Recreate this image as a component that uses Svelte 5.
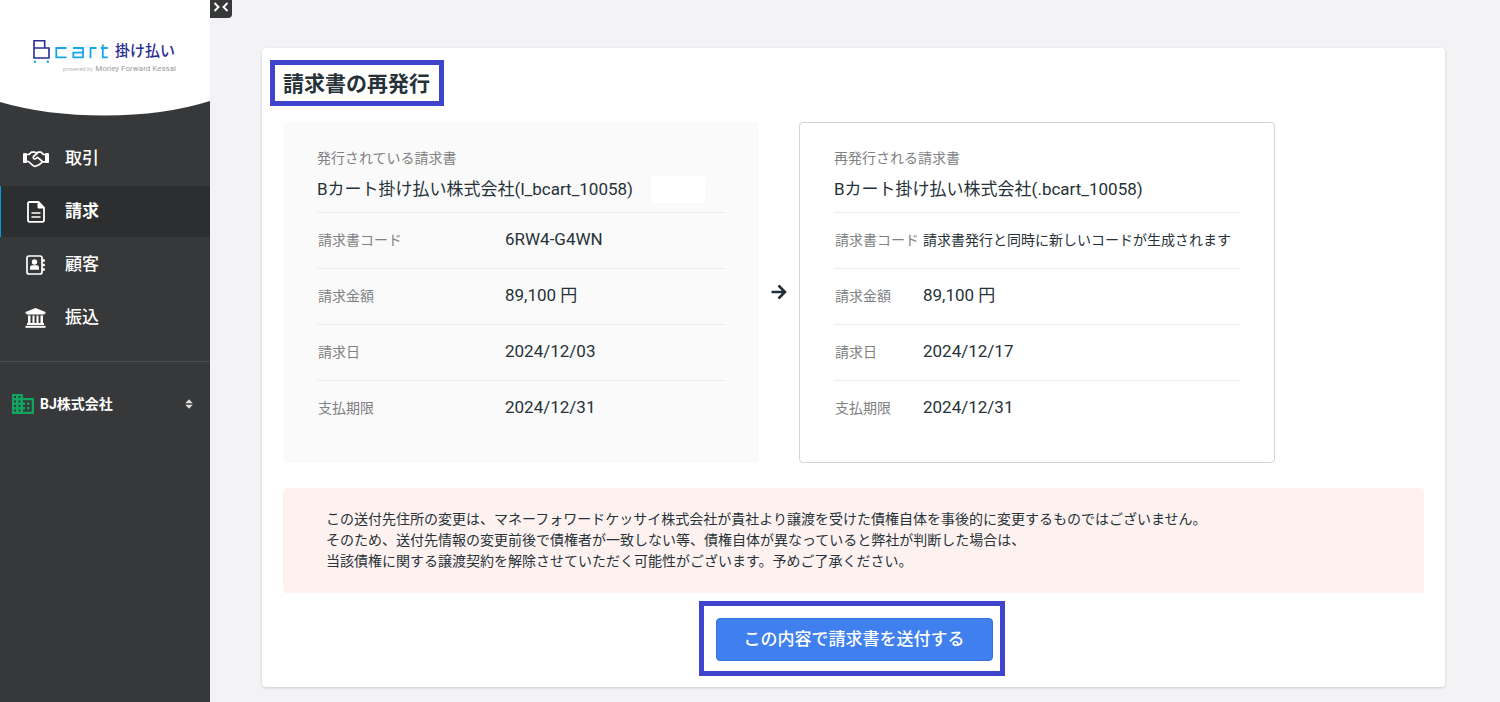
<script>
  const company = 'Bカート掛け払い株式会社';

  const menu = [
    { label: '取引', icon: 'handshake' },
    { label: '請求', icon: 'file', active: true },
    { label: '顧客', icon: 'contacts' },
    { label: '振込', icon: 'bank' },
  ];

  const invoices = [
    {
      kind: 'current',
      heading: '発行されている請求書',
      name: `${company}(l_bcart_10058)`,
      rows: [
        ['請求書コード', '6RW4-G4WN'],
        ['請求金額', '89,100 円'],
        ['請求日', '2024/12/03'],
        ['支払期限', '2024/12/31'],
      ],
    },
    {
      kind: 'next',
      heading: '再発行される請求書',
      name: `${company}(.bcart_10058)`,
      rows: [
        ['請求書コード', '請求書発行と同時に新しいコードが生成されます', true],
        ['請求金額', '89,100 円'],
        ['請求日', '2024/12/17'],
        ['支払期限', '2024/12/31'],
      ],
    },
  ];
</script>

{#snippet invoicePanel(inv)}
  <section class="panel {inv.kind}">
    <p class="kind">{inv.heading}</p>
    <h2 class="name">
      {inv.name}
      {#if inv.kind === 'current'}<span class="blank"></span>{/if}
    </h2>
    <table>
      <tbody>
        {#each inv.rows as [label, value, note]}
          <tr>
            <th scope="row">{label}</th>
            <td class:note>{value}</td>
          </tr>
        {/each}
      </tbody>
    </table>
  </section>
{/snippet}

<div class="app">
  <aside class="sidebar">
    <div class="brand">
      <svg class="curve" viewBox="0 0 210 116" preserveAspectRatio="none" aria-hidden="true">
        <path d="M0 0H210V101Q164 115.500 105 115.500T0 102Z" fill="#fff" />
      </svg>
      <a class="logo" href="#home" aria-label="Bcart 掛け払い">
        <span class="logo-main">
          <svg width="78" height="26" viewBox="0 0 78 26" fill="none" aria-hidden="true">
            <path d="M3 10V2.800H13.700V10M3 10H18V20H3Z" stroke="#2b2c91" stroke-width="1.600" />
            <circle cx="4" cy="23.800" r="1.200" fill="#12a8ec" />
            <circle cx="16.800" cy="23.800" r="1.200" fill="#12a8ec" />
            <g stroke="#12a8ec" stroke-width="1.800">
              <path d="M35.500 10H25.300V19.300H35.500" />
              <path d="M42 10H52V19.300H42.300V14.600H52" />
              <path d="M59.500 20.200V10H65.500" />
              <path d="M71.800 6.500V19.300H76.800M69.800 10H76.800" />
            </g>
          </svg>
          <span>掛け払い</span>
        </span>
        <span class="powered"><small>powered by</small> Money Forward Kessai</span>
      </a>
    </div>

    <nav>
      {#each menu as item}
        <a class="item" class:active={item.active} href="#{item.icon}">
          <span class="icon">
            {#if item.icon === 'handshake'}
              <svg width="26" height="18" viewBox="0 0 26 18" fill="none" stroke="#fff" stroke-width="1.700" stroke-linejoin="round" stroke-linecap="round">
                <path d="M0.500 4V12.500H3.500V4ZM22.500 4V12.500H25.500V4Z" fill="#fff" stroke-width="1" />
                <path d="M4 4.500H6L8.500 2.200H12L13 2.800M14 3.200L15 2.200H18L20.500 4.500H22M4 11.500H5.500L9.500 15.200Q11.500 17 13.500 15.800L15.500 15L17.500 13.700L19.500 11.800H22" />
                <path d="M14.500 3L10.500 6.500Q9.800 8.500 11.500 9Q13 9.200 14.500 7.300L19.500 11.500" />
              </svg>
            {:else if item.icon === 'file'}
              <svg width="18" height="22" viewBox="0 0 18 22" fill="none" stroke="#fff" stroke-width="1.800">
                <path d="M2.500 1H11.500L17 6.500V19Q17 20.800 15.500 20.800H2.500Q1 20.800 1 19V2.500Q1 1 2.500 1Z" />
                <path d="M11 1V7H17Z" fill="#fff" stroke-width="1" />
                <path d="M4.500 12H13.500M4.500 16H13.500" stroke-width="1.600" />
              </svg>
            {:else if item.icon === 'contacts'}
              <svg width="19" height="20" viewBox="0 0 19 20" fill="none" stroke="#fff" stroke-width="1.700">
                <rect x="1" y="1" width="15" height="18" rx="2" />
                <circle cx="8.500" cy="7" r="2.700" fill="#fff" stroke="none" />
                <path d="M4 14.800V12.500Q4 10.500 6 10.200H11Q13 10.500 13 12.500V14.800Z" fill="#fff" stroke="none" />
                <path d="M16 5.500H18.800M16 10H18.800M16 14.500H18.800" stroke-width="2.400" />
              </svg>
            {:else}
              <svg width="21" height="20" viewBox="0 0 21 20" fill="#fff">
                <path d="M10.500 0L20.500 4V5.500H19.500V6.500H1.500V5.500H0.500V4Z" />
                <path d="M3 7.500H5.500V15H7.500V7.500H9.500V15H11.500V7.500H13.500V15H15.500V7.500H18V15H19V17H2V15H3Z" />
                <path d="M0.500 17.800H20.500V19.800H0.500Z" />
              </svg>
            {/if}
          </span>
          <span class="label">{item.label}</span>
        </a>
      {/each}
    </nav>

    <button class="account" type="button">
      <svg width="22" height="20" viewBox="0 0 22 20" aria-hidden="true">
        <path fill="#12a562" fill-rule="evenodd" d="M0 0H11V4H22V20H0ZM2 2V4H4V2ZM6.500 2V4H8.500V2ZM2 6.500V8.500H4V6.500ZM6.500 6.500V8.500H8.500V6.500ZM2 11V13H4V11ZM6.500 11V13H8.500V11ZM2 15.500V17.500H4V15.500ZM6.500 15.500V17.500H8.500V15.500ZM11 6.300V8.500H13.200V11H11V13H13.200V15.500H11V17.700H19.700V6.300ZM15 8.500H17.300V11H15ZM15 13H17.300V15.500H15Z" />
      </svg>
      <span>BJ株式会社</span>
      <svg class="sort" width="8" height="10" viewBox="0 0 8 10" fill="#ddd" aria-hidden="true">
        <path d="M4 0.300L7.800 4.300H0.200ZM4 9.700L0.200 5.700H7.800Z" />
      </svg>
    </button>

    <button class="toggle" type="button" aria-label="メニューを閉じる">
      <svg width="16" height="10" viewBox="0 0 16 10" fill="none" stroke="#fff" stroke-width="1.900">
        <path d="M1.500 1L5.500 5L1.500 9M14.500 1L10.500 5L14.500 9" />
      </svg>
    </button>
  </aside>

  <main>
    <div class="card">
      <h1>請求書の再発行</h1>

      <div class="compare">
        {@render invoicePanel(invoices[0])}
        <svg class="arrow" width="16" height="16" viewBox="0 0 16 16" fill="none" stroke="#23303a" stroke-width="2.600" aria-hidden="true">
          <path d="M0.500 8H14M7.500 1.500L14 8L7.500 14.500" />
        </svg>
        {@render invoicePanel(invoices[1])}
      </div>

      <p class="notice">
        この送付先住所の変更は、マネーフォワードケッサイ株式会社が貴社より譲渡を受けた債権自体を事後的に変更するものではございません。<br />
        そのため、送付先情報の変更前後で債権者が一致しない等、債権自体が異なっていると弊社が判断した場合は、<br />
        当該債権に関する譲渡契約を解除させていただく可能性がございます。予めご了承ください。
      </p>

      <div class="submit">
        <div class="frame">
          <button type="button">この内容で請求書を送付する</button>
        </div>
      </div>
    </div>
  </main>
</div>

<style>
  :global(body) {
    background: #f3f3f6;
  }
  .app {
    display: flex;
    min-height: 100vh;
    font-family: Roboto, 'Noto Sans CJK JP', sans-serif;
    font-size: 14px;
    line-height: 20px;
    color: #263238;
  }
  .app *,
  .app {
    box-sizing: border-box;
  }
  h1, h2, p {
    margin: 0;
  }
  button {
    font: inherit;
    border: 0;
    cursor: pointer;
  }

  .sidebar {
    position: relative;
    flex: 0 0 210px;
    background: #373839;
    color: #fff;
  }
  .brand {
    position: relative;
    height: 116px;
    padding: 38px 34px 0 31px;
  }
  .curve {
    position: absolute;
    inset: 0;
    width: 100%;
    height: 100%;
  }
  .logo {
    position: relative;
    display: flex;
    flex-direction: column;
    text-decoration: none;
  }
  .logo-main {
    display: flex;
    align-items: center;
    gap: 6px;
    height: 26px;
    font-size: 15px;
    font-weight: 500;
    color: #2b2c91;
    white-space: nowrap;
  }
  .powered {
    align-self: flex-end;
    font-size: 8px;
    line-height: 10px;
    font-weight: 400;
    color: #9c9c9c;
    white-space: nowrap;
  }
  .powered small {
    font-size: 6px;
    font-weight: 300;
  }
  nav {
    display: grid;
    gap: 2px;
    padding: 17px 0 18px;
    border-bottom: 1px solid #4b4c4d;
  }
  .item {
    display: flex;
    align-items: center;
    gap: 16px;
    height: 51px;
    padding-left: 21px;
    border-left: 1px solid transparent;
    font-size: 17px;
    font-weight: 500;
    color: #fff;
    text-decoration: none;
  }
  .item.active {
    background: #2d2e2f;
    border-left-color: #039be5;
    font-weight: 700;
  }
  .icon {
    display: grid;
    place-items: center;
    width: 27px;
  }
  .label {
    padding-bottom: 2px;
  }
  .account {
    display: flex;
    align-items: center;
    gap: 6px;
    width: 100%;
    padding: 32px 17px 24px 12px;
    background: none;
    color: #fff;
    font-weight: 700;
  }
  .sort {
    margin-left: auto;
  }
  .toggle {
    position: absolute;
    top: 0;
    left: 100%;
    display: grid;
    place-items: center;
    width: 22px;
    height: 18px;
    padding: 0 0 4px;
    background: #373839;
    border-radius: 0 0 4px 0;
  }

  main {
    flex: 1;
    min-width: 0;
    padding: 48px 55px 15px 52px;
  }
  .card {
    padding: 12px 21px 11px;
    background: #fff;
    border-radius: 4px;
    box-shadow: 0 1px 3px rgba(0, 0, 0, 0.16);
  }
  h1 {
    width: fit-content;
    margin-left: -13px;
    padding: 5px 9px 3px 8px;
    border: 5px solid #3f44cc;
    font-size: 21px;
    line-height: 28px;
    font-weight: 700;
  }
  .compare {
    display: flex;
    align-items: stretch;
    margin-top: 16px;
  }
  .panel {
    flex: 0 1 476px;
    min-width: 0;
    padding: 25px 34px;
    border-radius: 4px;
  }
  .current {
    padding-top: 26px;
    background: #fafafa;
  }
  .next {
    border: 1px solid #d2d3d4;
  }
  .arrow {
    align-self: center;
    flex: none;
    margin: 0 12px;
  }
  .kind {
    color: #808182;
  }
  .name {
    display: flex;
    align-items: center;
    gap: 18px;
    height: 44px;
    padding-bottom: 2px;
    font-size: 17px;
    font-weight: 400;
    white-space: nowrap;
  }
  .blank {
    width: 54px;
    height: 27px;
    background: #fff;
    border-radius: 2px;
  }
  table {
    width: 100%;
    border-collapse: collapse;
    table-layout: fixed;
  }
  tr {
    height: 56px;
    border-top: 1px solid #ececec;
  }
  th {
    width: 188px;
    padding: 0 0 2px 1px;
    text-align: left;
    font-weight: 400;
    color: #808182;
    white-space: nowrap;
  }
  .next th {
    width: 89px;
  }
  td {
    padding: 0 0 3px;
    font-size: 17px;
  }
  td.note {
    padding-bottom: 2px;
    font-size: 14px;
  }
  .notice {
    margin-top: 25px;
    padding: 21px 43px;
    background: #fef2f1;
    border-radius: 4px;
    line-height: 21px;
  }
  .submit {
    display: flex;
    justify-content: center;
    margin-top: 8px;
    padding-right: 4px;
  }
  .frame {
    padding: 12px 7px 10px 12px;
    border: 5px solid #3f44cc;
  }
  .frame button {
    display: block;
    height: 43px;
    padding: 0 27px;
    background: #4080ee;
    border: 1px solid #3671e0;
    border-radius: 4px;
    color: #fff;
    font-size: 17px;
    font-weight: 500;
  }
</style>
